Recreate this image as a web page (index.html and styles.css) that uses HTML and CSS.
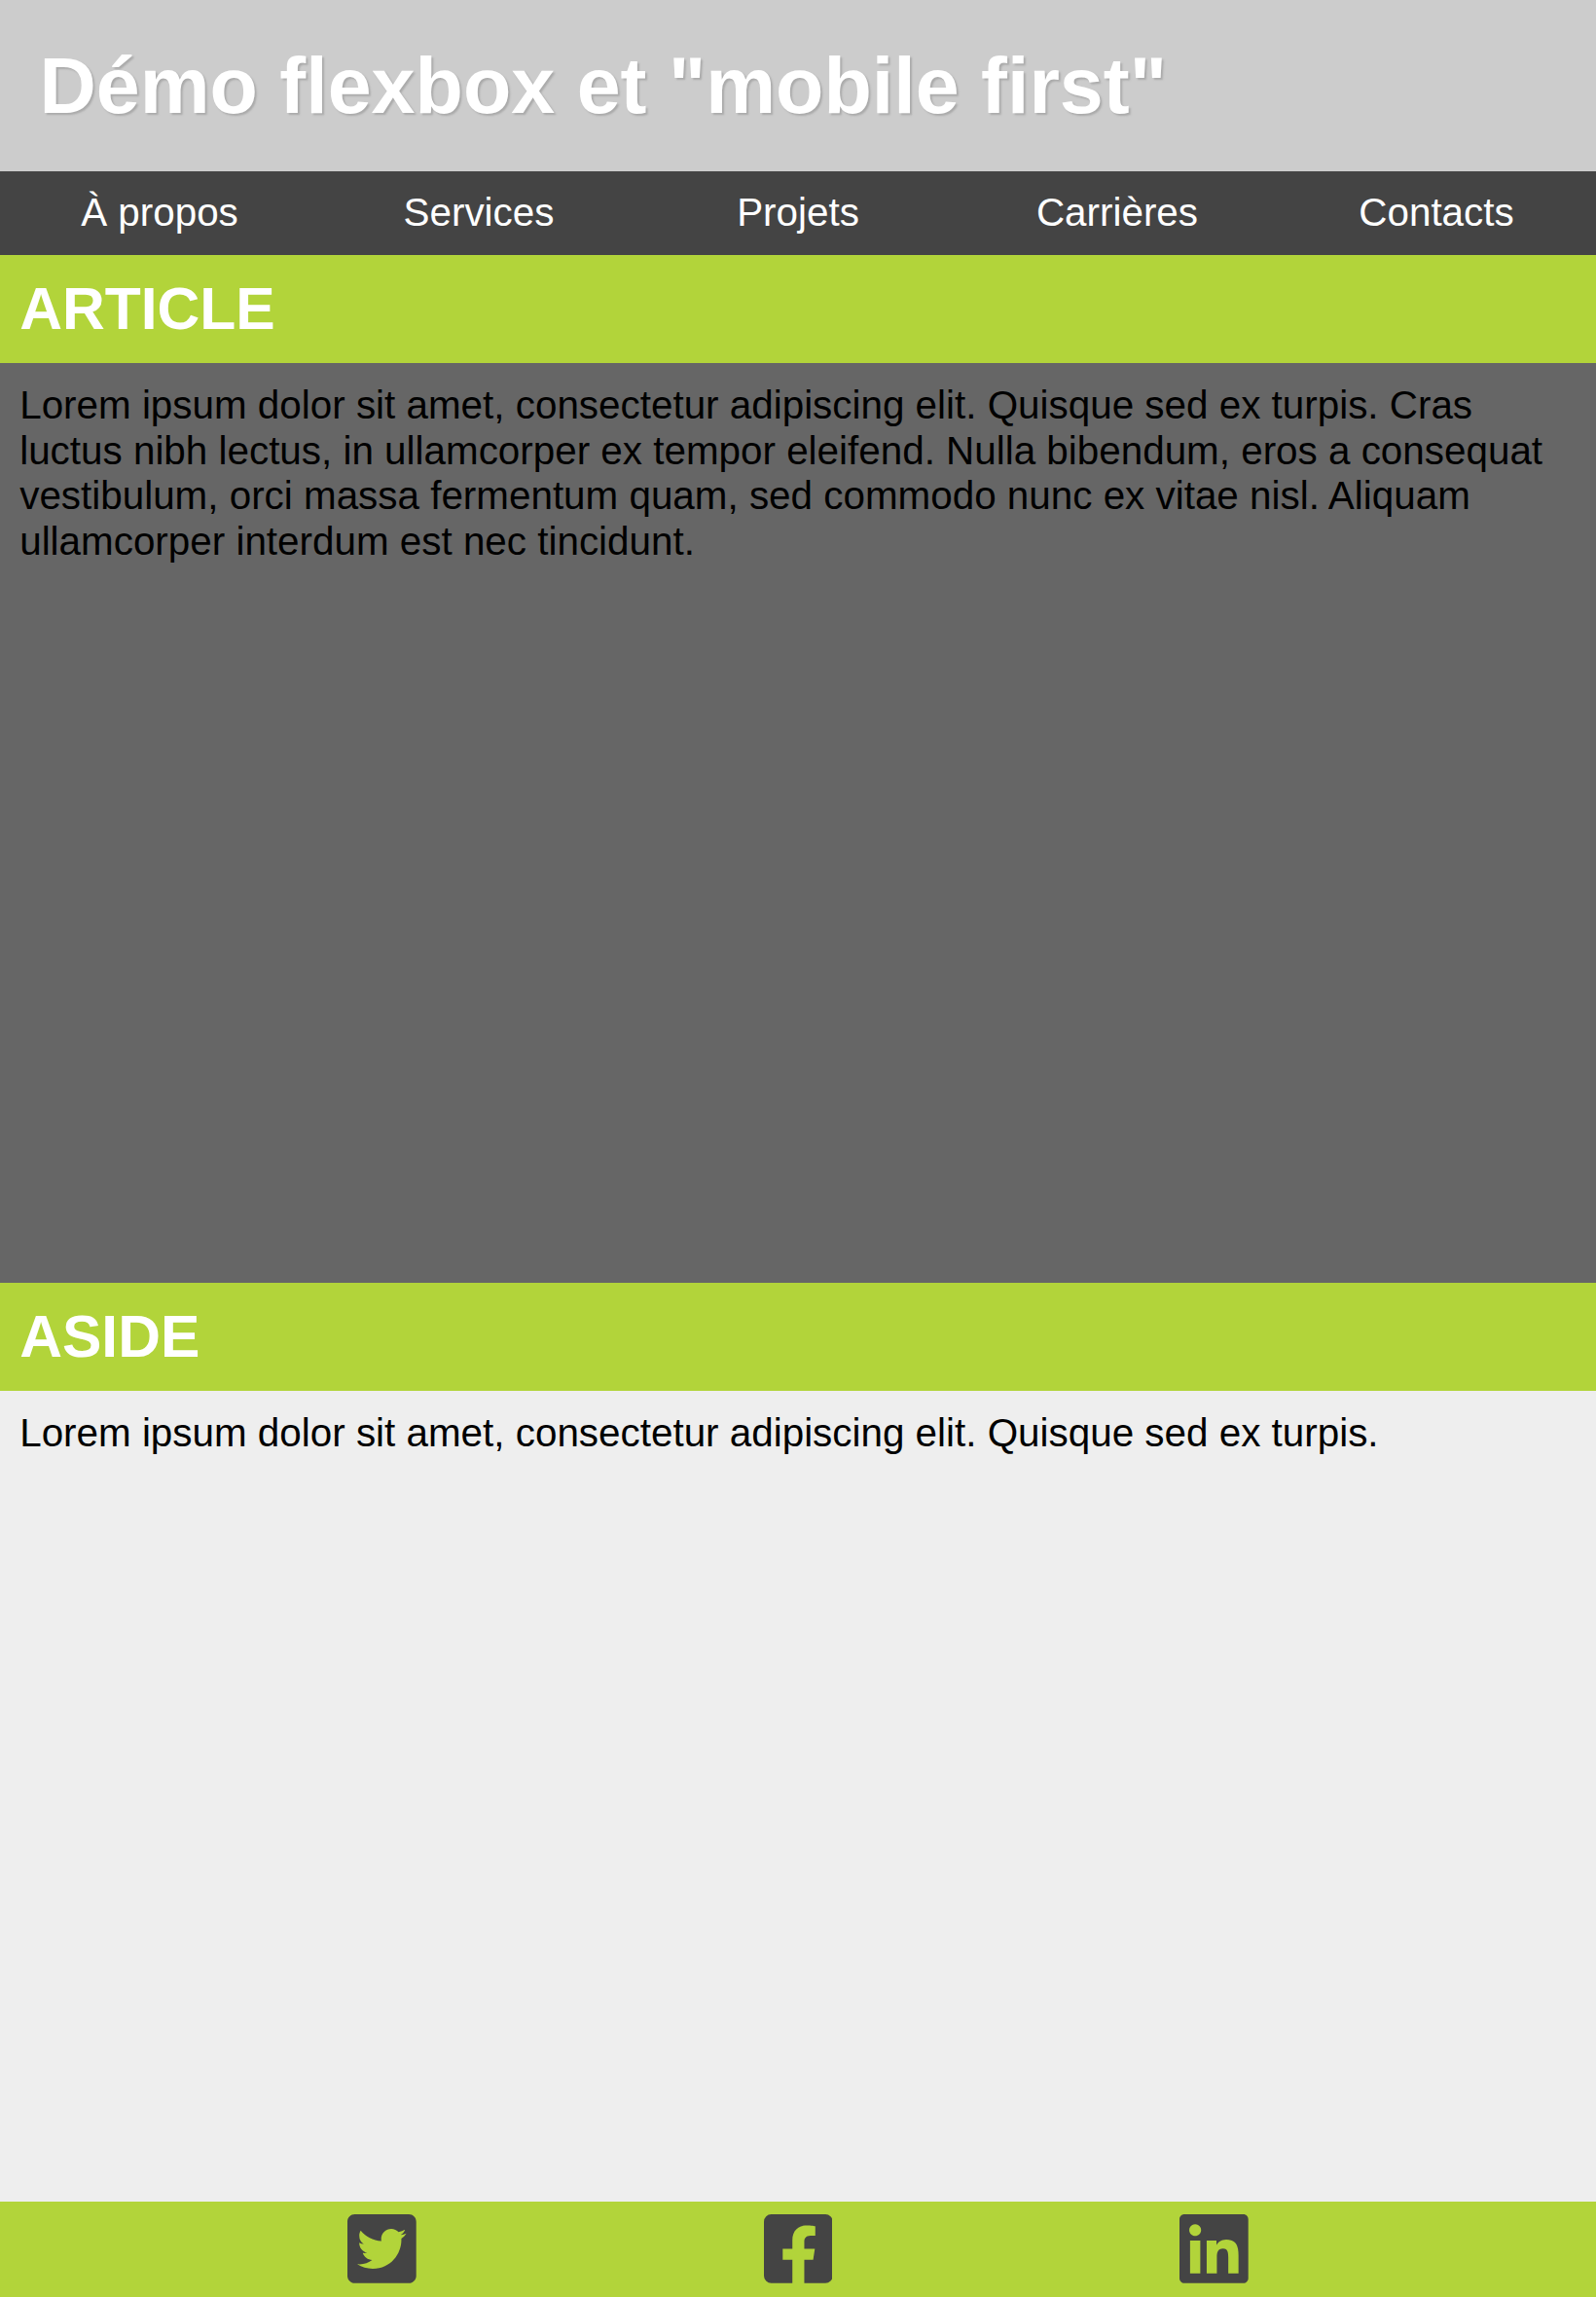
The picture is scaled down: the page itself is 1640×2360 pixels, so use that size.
FILE: index.html
```html
<!DOCTYPE html>
<html lang="fr">
<head>
<meta charset="utf-8">
<title>Démo flexbox et "mobile first"</title>
<link rel="stylesheet" href="styles.css">
</head>
<body>
<header class="site-header"><h1 class="site-title">Démo flexbox et "mobile first"</h1></header>
<nav class="site-nav">
<a class="nav-link">À propos</a>
<a class="nav-link">Services</a>
<a class="nav-link">Projets</a>
<a class="nav-link">Carrières</a>
<a class="nav-link">Contacts</a>
</nav>
<main class="content">
<article class="article">
<h2 class="section-title">ARTICLE</h2>
<p class="text">Lorem ipsum dolor sit amet, consectetur adipiscing elit. Quisque sed ex turpis. Cras luctus nibh lectus, in ullamcorper ex tempor eleifend. Nulla bibendum, eros a consequat vestibulum, orci massa fermentum quam, sed commodo nunc ex vitae nisl. Aliquam ullamcorper interdum est nec tincidunt.</p>
</article>
<aside class="aside">
<h2 class="section-title">ASIDE</h2>
<p class="text">Lorem ipsum dolor sit amet, consectetur adipiscing elit. Quisque sed ex turpis.</p>
</aside>
</main>
<footer class="site-footer">
<svg class="icon" viewBox="0 0 448 512" role="img" aria-label="Twitter"><path d="M400 32H48C21.5 32 0 53.5 0 80v352c0 26.500 21.500 48 48 48h352c26.500 0 48-21.500 48-48V80c0-26.500-21.500-48-48-48zm-48.900 158.800c.2 2.800.2 5.700.2 8.500 0 86.700-66 186.600-186.600 186.600-37.200 0-71.700-10.800-100.700-29.400 5.300.6 10.400.8 15.800.8 30.700 0 58.900-10.400 81.400-28-28.800-.6-53-19.500-61.300-45.500 10.100 1.500 19.200 1.500 29.600-1.200-30-6.100-52.500-32.500-52.500-64.400v-.8c8.700 4.900 18.900 7.900 29.600 8.300a65.447 65.447 0 0 1-29.200-54.600c0-12.200 3.200-23.400 8.900-33.100 32.300 39.800 80.800 65.800 135.200 68.600-9.300-44.500 24-80.600 64-80.600 18.900 0 35.900 7.900 47.900 20.700 14.800-2.800 29-8.300 41.600-15.800-4.900 15.200-15.200 28-28.800 36.100 13.200-1.400 26-5.100 37.800-10.200-8.900 13.100-20.100 24.700-32.900 34z"/></svg>
<svg class="icon" viewBox="0 0 448 512" role="img" aria-label="Facebook"><path d="M400 32H48A48 48 0 0 0 0 80v352a48 48 0 0 0 48 48h137.250V327.690h-63V256h63v-54.640c0-62.150 37-96.480 93.670-96.480 27.140 0 55.520 4.840 55.520 4.840v61h-31.270c-30.810 0-40.420 19.120-40.420 38.730V256h68.780l-11 71.690h-57.780V480H400a48 48 0 0 0 48-48V80a48 48 0 0 0-48-48z"/></svg>
<svg class="icon" viewBox="0 0 448 512" role="img" aria-label="LinkedIn"><path d="M416 32H31.900C14.300 32 0 46.500 0 64.300v383.400C0 465.500 14.300 480 31.900 480H416c17.600 0 32-14.500 32-32.300V64.300c0-17.800-14.400-32.300-32-32.300zM135.400 416H69V202.200h66.500V416zm-33.200-243c-21.300 0-38.500-17.300-38.500-38.500S80.900 96 102.200 96c21.200 0 38.500 17.300 38.500 38.500 0 21.300-17.200 38.500-38.500 38.500zm282.100 243h-66.400V312c0-24.800-.5-56.700-34.500-56.700-34.600 0-39.900 27-39.900 54.900V416h-66.400V202.200h63.700v29.200h.9c8.900-16.800 30.600-34.500 62.900-34.500 67.200 0 79.700 44.300 79.700 101.900V416z"/></svg>
</footer>
</body>
</html>
```
FILE: styles.css
```css
* { box-sizing: border-box; }
body {
  margin: 0;
  height: 2360px;
  display: flex;
  flex-direction: column;
  font: 40.4px/46.5px "Liberation Sans", Arial, sans-serif;
  color: #000;
}
.site-header { height: 176px; padding: 0 40.4px; background: #ccc; display: flex; align-items: center; }
.site-title { margin: 0; font-size: 80.8px; line-height: 92px; color: #fff; text-shadow: 2px 2px 2px #aaa; }
.site-nav { height: 86.3px; padding-bottom: 2px; background: #444; display: flex; align-items: center; }
.nav-link { flex: 1; color: #fff; text-align: center; }
.content { flex: 1; display: flex; flex-direction: column; }
.article { height: 1056px; background: #666; }
.aside { flex: 1; background: #eee; }
.section-title { margin: 0; padding: 20.2px; height: 110.3px; line-height: 70px; font-size: 60.6px; color: #fff; background: #b2d43a; }
.text { margin: 0; padding: 20.7px 20.2px; }
.site-footer { height: 98px; padding-bottom: 1px; background: #b2d43a; display: flex; justify-content: space-evenly; align-items: center; }
.icon { width: 70.7px; height: 80.8px; fill: #444; }
```
